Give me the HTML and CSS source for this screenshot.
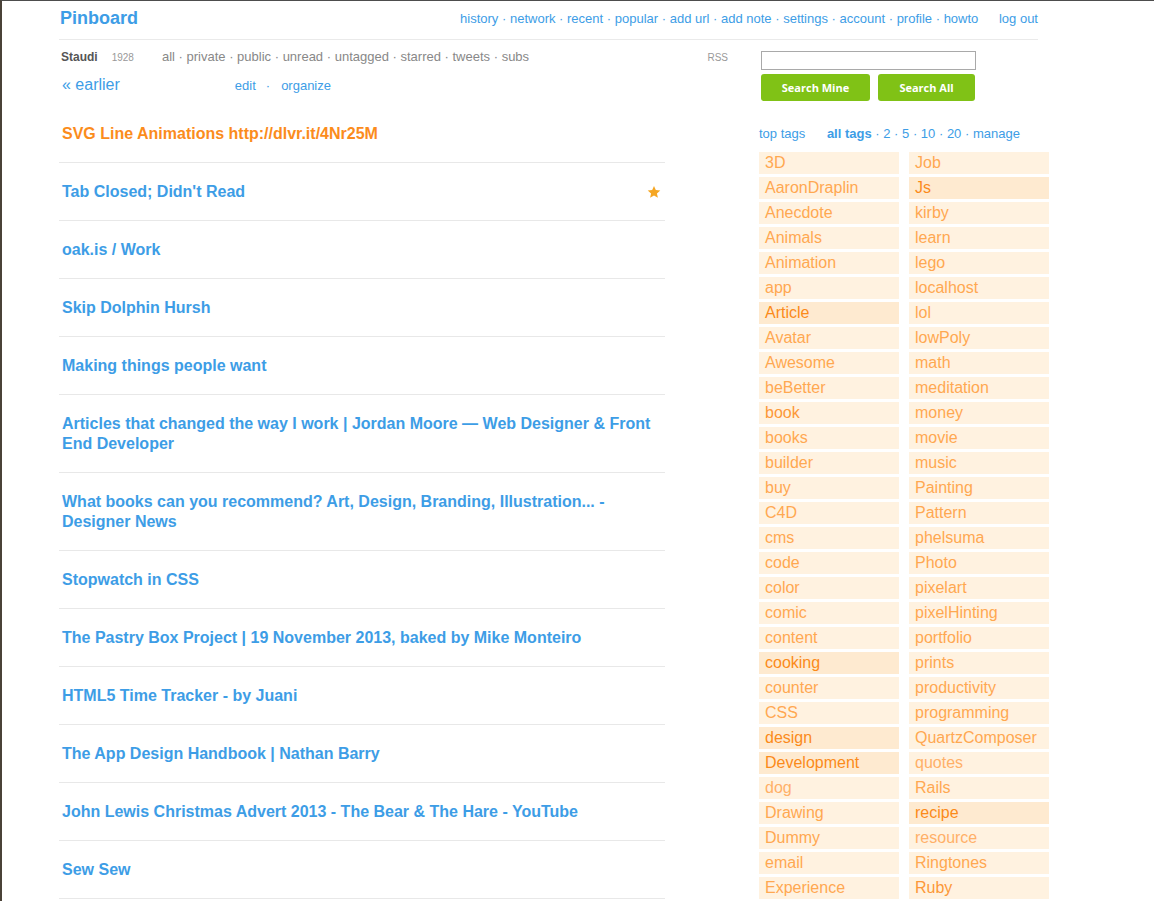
FILE: index.html
```html
<!DOCTYPE html>
<html>
<head>
<meta charset="utf-8">
<title>Pinboard</title>
<link rel="stylesheet" href="styles.css">
</head>
<body>
<div class="page">
  <header class="topbar">
    <a class="logo" href="#">Pinboard</a>
    <nav class="mainnav">
      <a href="#">history</a> · <a href="#">network</a> · <a href="#">recent</a> · <a href="#">popular</a> · <a href="#">add url</a> · <a href="#">add note</a> · <a href="#">settings</a> · <a href="#">account</a> · <a href="#">profile</a> · <a href="#">howto</a>
      <a class="logout" href="#">log out</a>
    </nav>
  </header>
  <div class="content">
    <main class="left">
      <div class="userrow">
        <span class="user">Staudi</span>
        <span class="count">1928</span>
        <span class="filters"><a href="#">all</a> · <a href="#">private</a> · <a href="#">public</a> · <a href="#">unread</a> · <a href="#">untagged</a> · <a href="#">starred</a> · <a href="#">tweets</a> · <a href="#">subs</a></span>
        <span class="rss">RSS</span>
      </div>
      <div class="pagerow">
        <a class="earlier" href="#">« earlier</a>
        <span class="edit"><a href="#">edit</a><span class="dot">·</span><a href="#">organize</a></span>
      </div>
      <ul class="bookmarks">
        <li class="bm"><a class="title unread" href="#">SVG Line Animations http://dlvr.it/4Nr25M</a></li>
        <li class="bm"><a class="title" href="#">Tab Closed; Didn't Read</a>
          <svg class="star" width="14" height="14" viewBox="0 0 24 24"><polygon points="12,1.5 15.1,8.6 22.8,9.3 17,14.4 18.7,22 12,18 5.3,22 7,14.4 1.2,9.3 8.9,8.6" fill="#f5a623"/></svg>
        </li>
        <li class="bm"><a class="title" href="#">oak.is / Work</a></li>
        <li class="bm"><a class="title" href="#">Skip Dolphin Hursh</a></li>
        <li class="bm"><a class="title" href="#">Making things people want</a></li>
        <li class="bm"><a class="title" href="#">Articles that changed the way I work | Jordan Moore — Web Designer &amp; Front End Developer</a></li>
        <li class="bm"><a class="title" href="#">What books can you recommend? Art, Design, Branding, Illustration... - Designer News</a></li>
        <li class="bm"><a class="title" href="#">Stopwatch in CSS</a></li>
        <li class="bm"><a class="title" href="#">The Pastry Box Project | 19 November 2013, baked by Mike Monteiro</a></li>
        <li class="bm"><a class="title" href="#">HTML5 Time Tracker - by Juani</a></li>
        <li class="bm"><a class="title" href="#">The App Design Handbook | Nathan Barry</a></li>
        <li class="bm"><a class="title" href="#">John Lewis Christmas Advert 2013 - The Bear &amp; The Hare - YouTube</a></li>
        <li class="bm"><a class="title" href="#">Sew Sew</a></li>
      </ul>
    </main>
    <aside class="right">
      <form class="search">
        <input class="searchbox" type="text">
        <div class="buttons">
          <button class="btn mine" type="button">Search Mine</button>
          <button class="btn all" type="button">Search All</button>
        </div>
      </form>
      <div class="tagnav">
        <a href="#" class="toptags">top tags</a>
        <span class="alltags"><b>all tags</b> · <a href="#">2</a> · <a href="#">5</a> · <a href="#">10</a> · <a href="#">20</a> · <a href="#">manage</a></span>
      </div>
      <div class="tags">
        <div class="tagcol">
          <a class="tag" href="#">3D</a>
          <a class="tag" href="#">AaronDraplin</a>
          <a class="tag" href="#">Anecdote</a>
          <a class="tag" href="#">Animals</a>
          <a class="tag" href="#">Animation</a>
          <a class="tag" href="#">app</a>
          <a class="tag hot" href="#">Article</a>
          <a class="tag" href="#">Avatar</a>
          <a class="tag" href="#">Awesome</a>
          <a class="tag" href="#">beBetter</a>
          <a class="tag mid" href="#">book</a>
          <a class="tag" href="#">books</a>
          <a class="tag" href="#">builder</a>
          <a class="tag" href="#">buy</a>
          <a class="tag" href="#">C4D</a>
          <a class="tag" href="#">cms</a>
          <a class="tag" href="#">code</a>
          <a class="tag" href="#">color</a>
          <a class="tag" href="#">comic</a>
          <a class="tag" href="#">content</a>
          <a class="tag hot" href="#">cooking</a>
          <a class="tag" href="#">counter</a>
          <a class="tag" href="#">CSS</a>
          <a class="tag hot" href="#">design</a>
          <a class="tag hot" href="#">Development</a>
          <a class="tag pale" href="#">dog</a>
          <a class="tag" href="#">Drawing</a>
          <a class="tag" href="#">Dummy</a>
          <a class="tag" href="#">email</a>
          <a class="tag" href="#">Experience</a>
        </div>
        <div class="tagcol">
          <a class="tag" href="#">Job</a>
          <a class="tag hot" href="#">Js</a>
          <a class="tag" href="#">kirby</a>
          <a class="tag" href="#">learn</a>
          <a class="tag" href="#">lego</a>
          <a class="tag" href="#">localhost</a>
          <a class="tag" href="#">lol</a>
          <a class="tag" href="#">lowPoly</a>
          <a class="tag" href="#">math</a>
          <a class="tag" href="#">meditation</a>
          <a class="tag" href="#">money</a>
          <a class="tag" href="#">movie</a>
          <a class="tag" href="#">music</a>
          <a class="tag" href="#">Painting</a>
          <a class="tag" href="#">Pattern</a>
          <a class="tag" href="#">phelsuma</a>
          <a class="tag" href="#">Photo</a>
          <a class="tag" href="#">pixelart</a>
          <a class="tag" href="#">pixelHinting</a>
          <a class="tag" href="#">portfolio</a>
          <a class="tag" href="#">prints</a>
          <a class="tag" href="#">productivity</a>
          <a class="tag" href="#">programming</a>
          <a class="tag" href="#">QuartzComposer</a>
          <a class="tag pale" href="#">quotes</a>
          <a class="tag" href="#">Rails</a>
          <a class="tag hot" href="#">recipe</a>
          <a class="tag pale" href="#">resource</a>
          <a class="tag" href="#">Ringtones</a>
          <a class="tag mid" href="#">Ruby</a>
        </div>
      </div>
    </aside>
  </div>
</div>
</body>
</html>
```

FILE: styles.css
```css
html, body {
  margin: 0;
  padding: 0;
}
body {
  background: #fff;
  border-top: 1px solid #4d4d4d;
  border-left: 2px solid #4a4238;
  min-height: 900px;
  font-family: "Liberation Sans", Arial, Helvetica, sans-serif;
  color: #555;
  overflow: hidden;
}
a {
  color: #3d9de6;
  text-decoration: none;
}
.page {
  padding-left: 57px;
  width: 990px;
}
.topbar {
  display: flex;
  align-items: center;
  justify-content: space-between;
  width: 979px;
  height: 34px;
  padding-bottom: 4px;
  border-bottom: 1px solid #eaeaea;
}
.logo {
  font-size: 18px;
  font-weight: bold;
  color: #3d9de6;
  padding-left: 1px;
}
.mainnav {
  font-size: 13px;
  color: #3d9de6;
  padding-left: 1px;
}
.logout {
  margin-left: 17px;
}
.content {
  display: flex;
}
.left {
  width: 700px;
}
.userrow {
  display: flex;
  align-items: baseline;
  margin-top: 7px;
  height: 20px;
  line-height: 20px;
  padding-left: 2px;
}
.user {
  font-size: 12px;
  font-weight: bold;
  color: #555;
}
.count {
  font-size: 10px;
  color: #999;
  margin-left: 14px;
}
.filters {
  font-size: 13px;
  color: #888;
  margin-left: 28px;
}
.filters a {
  color: #888;
}
.rss {
  font-size: 10px;
  color: #999;
  margin-left: auto;
  margin-right: 31px;
}
.pagerow {
  display: flex;
  align-items: baseline;
  margin-top: 8px;
  height: 20px;
  line-height: 20px;
  padding-left: 3px;
}
.earlier {
  font-size: 16px;
}
.edit {
  font-size: 13px;
  margin-left: 115px;
}
.edit .dot {
  color: #3d9de6;
  margin: 0 11px 0 10px;
}
.bookmarks {
  list-style: none;
  margin: 10px 0 0 0;
  padding: 0;
  width: 606px;
}
.bm {
  display: flex;
  align-items: flex-start;
  justify-content: space-between;
  padding: 19px 0 18px 3px;
  border-bottom: 1px solid #e8e8e8;
}
.title {
  font-size: 16px;
  font-weight: bold;
  line-height: 20px;
  color: #3d9de6;
}
.title.unread {
  color: #fb8c1c;
}
.star {
  margin-top: 3px;
  margin-right: 4px;
  flex: none;
}
.right {
  width: 290px;
  margin-left: 0;
}
.search {
  margin: 11px 0 0 2px;
}
.searchbox {
  display: block;
  box-sizing: border-box;
  width: 215px;
  height: 19px;
  margin: 0;
  padding: 1px 3px;
  border: 1px solid #a9a9a9;
  background: #fff;
  font-size: 12px;
}
.buttons {
  display: flex;
  gap: 8px;
  margin-top: 4px;
}
.btn {
  height: 27px;
  border: none;
  border-radius: 3px;
  background: #80c216;
  color: #fff;
  font-family: "Open Sans", "Liberation Sans", Arial, sans-serif;
  font-weight: bold;
  font-size: 11px;
  padding: 0;
  cursor: pointer;
}
.btn.mine {
  width: 109px;
}
.btn.all {
  width: 97px;
}
.tagnav {
  margin-top: 25px;
  height: 16px;
  line-height: 16px;
  font-size: 13px;
  color: #3d9de6;
}
.alltags {
  margin-left: 18px;
}
.alltags b {
  color: #3d9de6;
}
.tags {
  display: flex;
  gap: 10px;
  margin-top: 10px;
}
.tagcol {
  display: flex;
  flex-direction: column;
  gap: 3px;
  width: 140px;
}
.tag {
  display: block;
  height: 22px;
  line-height: 22px;
  padding-left: 6px;
  font-size: 16px;
  background: #fff2e0;
  color: #ffa851;
  white-space: nowrap;
  overflow: hidden;
}
.tag.mid {
  color: #fc9838;
}
.tag.hot {
  background: #feead0;
  color: #fb8a1a;
}
.tag.pale {
  color: #ffb068;
}
```
